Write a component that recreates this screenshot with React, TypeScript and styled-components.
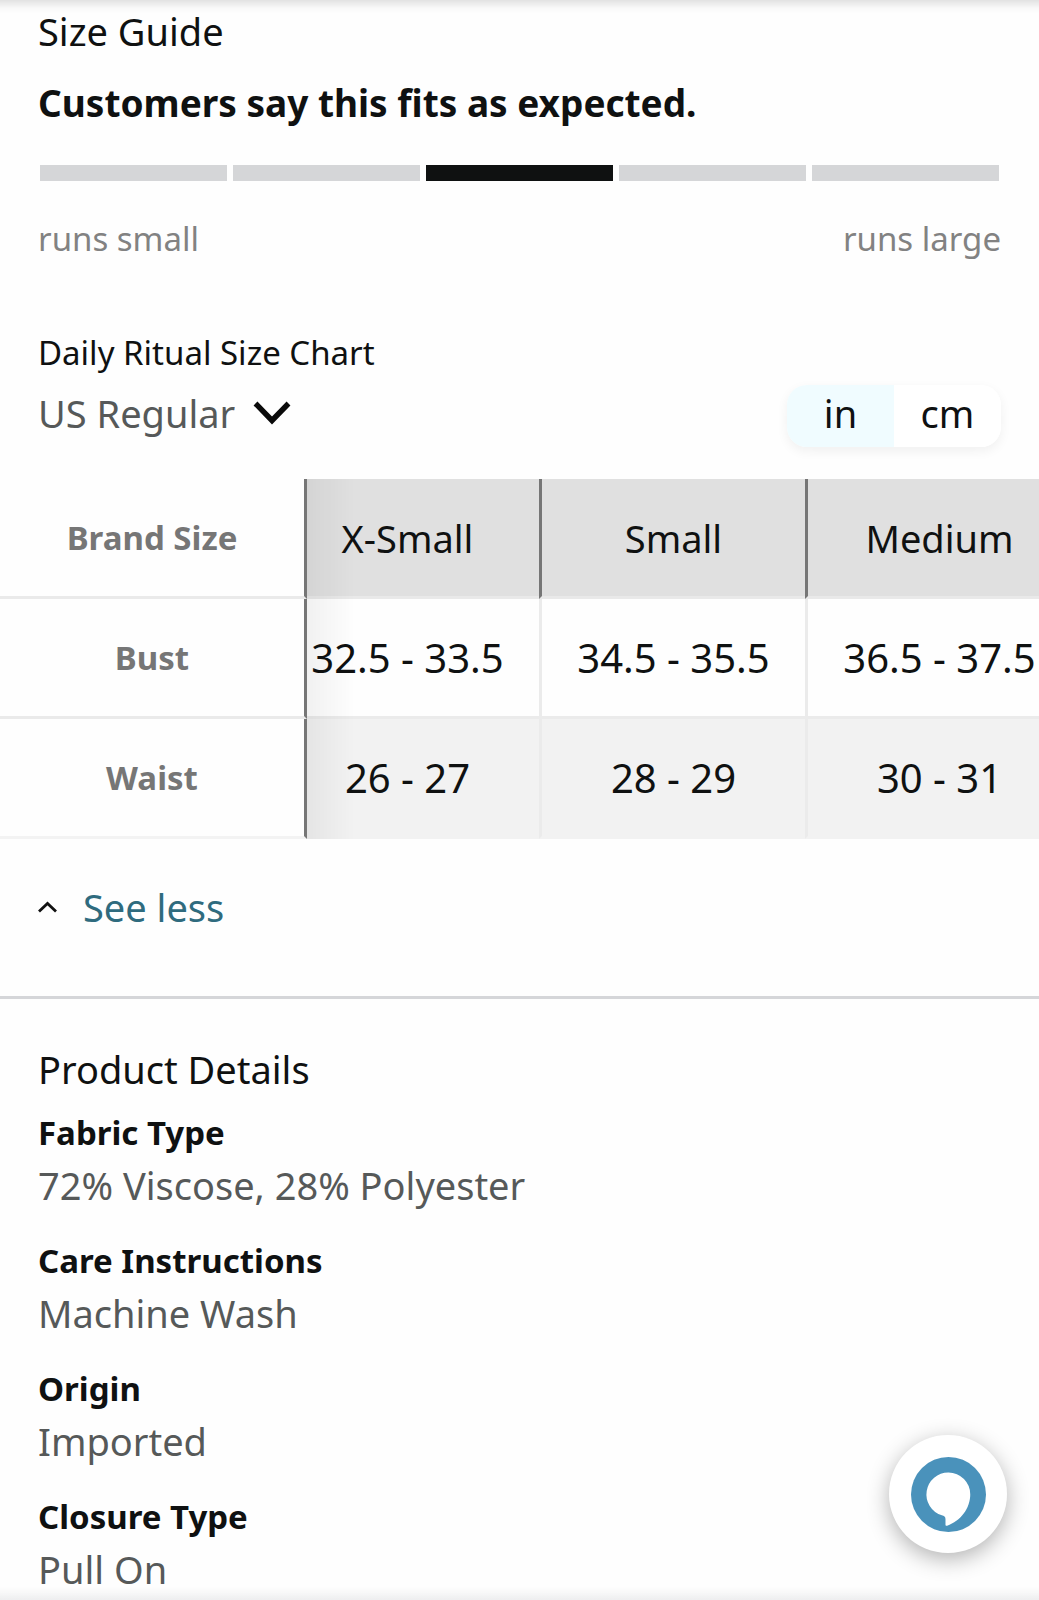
import React, { useLayoutEffect, useRef, useState } from "react";
import styled, { createGlobalStyle } from "styled-components";

const GlobalStyle = createGlobalStyle`
  *, *::before, *::after { box-sizing: border-box; }
  body {
    margin: 0;
    background: #fefefe;
    color: #0f1111;
    font-family: "Noto Sans", "Open Sans", sans-serif;
  }
  button, select, input { font: inherit; color: inherit; }
`;

const TEXT = { large: "38px", medium: "37px", small: "33px" };

const Page = styled.main`
  min-height: 100vh;
  overflow-x: hidden;
`;

const EdgeShadow = styled.div<{ $edge: "top" | "bottom" }>`
  position: fixed;
  z-index: 5;
  left: 0;
  right: 0;
  ${(p) => p.$edge}: 0;
  height: 14px;
  pointer-events: none;
  background: linear-gradient(
    to ${(p) => (p.$edge === "top" ? "bottom" : "top")},
    ${(p) => (p.$edge === "top" ? "rgba(0, 0, 0, 0.11)" : "rgba(20, 30, 50, 0.07)")},
    rgba(0, 0, 0, 0.02) 60%,
    transparent
  );
`;

const Section = styled.section<{ $top: number; $bottom: number }>`
  padding-top: ${(p) => p.$top}px;
  padding-bottom: ${(p) => p.$bottom}px;
`;

const Inset = styled.div`
  padding: 0 38px;
`;

const Title = styled.h2`
  margin: 0 0 12px;
  font-size: ${TEXT.large};
  line-height: 56px;
  font-weight: 400;
`;

const FitSummary = styled.p`
  margin: 0 0 30px;
  font-size: ${TEXT.medium};
  line-height: 64px;
  font-weight: 700;
`;

const FitScale = styled.div`
  display: grid;
  grid-template-columns: repeat(5, 1fr);
  gap: 6px;
  padding: 0 2px;
`;

const FitSegment = styled.span<{ $active: boolean }>`
  height: 16px;
  background: ${(p) => (p.$active ? "#0f1111" : "#d5d6d8")};
`;

const FitLabels = styled.div`
  display: flex;
  justify-content: space-between;
  margin: 34px 0 66px;
  font-size: ${TEXT.small};
  line-height: 48px;
  color: #828282;
`;

const ChartHeader = styled.div`
  display: flex;
  justify-content: space-between;
  align-items: flex-end;
  margin-bottom: 32px;
`;

const ChartIntro = styled.div`
  display: grid;
  gap: 8px;
  justify-items: start;
  padding-bottom: 6px;
`;

const ChartName = styled.label`
  font-size: ${TEXT.small};
  line-height: 48px;
`;

const SelectBox = styled.div`
  display: flex;
  align-items: center;
  gap: 18px;
`;

const SizeSelect = styled.select`
  appearance: none;
  field-sizing: content;
  height: 56px;
  margin: 0;
  padding: 0;
  border: 0;
  background: transparent;
  font-size: ${TEXT.large};
  line-height: 56px;
  color: #565959;
`;

const Units = styled.fieldset`
  display: flex;
  margin: 0;
  padding: 0;
  border: 0;
  border-radius: 20px;
  box-shadow: 0 4px 12px rgba(0, 0, 0, 0.06);
`;

const UnitOption = styled.label<{ $selected: boolean }>`
  position: relative;
  width: 107px;
  padding-bottom: 6px;
  font-size: ${TEXT.large};
  line-height: 56px;
  text-align: center;
  cursor: pointer;
  background: ${(p) => (p.$selected ? "#f0fcff" : "#ffffff")};
  &:first-of-type { border-radius: 20px 0 0 20px; }
  &:last-of-type { border-radius: 0 20px 20px 0; }
`;

const HiddenRadio = styled.input`
  position: absolute;
  inset: 0;
  width: 100%;
  height: 100%;
  margin: 0;
  opacity: 0;
  cursor: pointer;
`;

const TableScroller = styled.div`
  overflow-x: auto;
  scrollbar-width: none;
`;

const SizeTable = styled.table`
  table-layout: fixed;
  width: 1105px;
  border-collapse: separate;
  border-spacing: 0;
`;

const StickyCol = styled.col`
  width: 307px;
`;

const RowHeading = styled.th<{ $last?: boolean }>`
  position: sticky;
  z-index: 1;
  left: 0;
  height: 120px;
  padding: 0;
  background: #fefefe;
  border-right: 3px solid #767676;
  border-bottom: 3px solid ${(p) => (p.$last ? "#f3f3f3" : "#eaeaea")};
  font-size: ${TEXT.small};
  font-weight: 700;
  color: #767676;
  &::after {
    content: "";
    position: absolute;
    top: 0;
    bottom: -3px;
    left: calc(100% + 3px);
    width: 48px;
    background: linear-gradient(to right, rgba(0, 0, 0, 0.05), transparent);
  }
`;

const SizeHeading = styled.th`
  padding: 0;
  background: #e0e0e0;
  border-left: 3px solid #767676;
  border-bottom: 3px solid #e9e9e9;
  font-size: ${TEXT.large};
  font-weight: 400;
`;

const SizeCell = styled.td<{ $shaded: boolean }>`
  padding: 0;
  background: ${(p) => (p.$shaded ? "#f2f2f2" : "#fefefe")};
  border-left: 3px solid #ebebeb;
  border-bottom: 3px solid ${(p) => (p.$shaded ? "#f2f2f2" : "#ebebeb")};
  font-size: 40px;
  text-align: center;
  white-space: nowrap;
`;

const SeeLess = styled.button`
  display: flex;
  align-items: center;
  gap: 26px;
  margin-top: 40px;
  padding: 0;
  border: 0;
  background: none;
  font-size: ${TEXT.large};
  line-height: 56px;
  color: #2f6b7e;
  cursor: pointer;
`;

const Divider = styled.hr`
  height: 3px;
  margin: 0;
  border: 0;
  background: #d5d6d9;
`;

const Details = styled.dl`
  display: grid;
  gap: 24px;
  margin: 0;
`;

const DetailLabel = styled.dt`
  font-size: ${TEXT.small};
  line-height: 48px;
  font-weight: 700;
`;

const DetailValue = styled.dd`
  margin: 0;
  font-size: ${TEXT.large};
  line-height: 56px;
  color: #565959;
`;

const AssistantButton = styled.button`
  position: fixed;
  z-index: 4;
  right: 32px;
  bottom: 47px;
  display: grid;
  place-items: center;
  width: 118px;
  height: 118px;
  padding: 0;
  border: 0;
  border-radius: 50%;
  background: #ffffff;
  box-shadow: 0 6px 22px rgba(0, 0, 0, 0.3);
  cursor: pointer;
`;

const sizes = ["X-Small", "Small", "Medium"];

const measurements = [
  { name: "Bust", values: ["32.5 - 33.5", "34.5 - 35.5", "36.5 - 37.5"] },
  { name: "Waist", values: ["26 - 27", "28 - 29", "30 - 31"] },
];

const details = [
  { label: "Fabric Type", value: "72% Viscose, 28% Polyester" },
  { label: "Care Instructions", value: "Machine Wash" },
  { label: "Origin", value: "Imported" },
  { label: "Closure Type", value: "Pull On" },
];

const ChevronDown = () => (
  <svg width="38" height="24" viewBox="0 0 38 24" fill="none" aria-hidden="true">
    <path d="M2.5 2.5 19 19.5 35.5 2.5" stroke="#0a0a0a" strokeWidth="5.4" />
  </svg>
);

const ChevronUp = () => (
  <svg width="19" height="12" viewBox="0 0 19 12" fill="none" aria-hidden="true">
    <path d="M1 10.5 9.5 2.5 18 10.5" stroke="#111111" strokeWidth="2.8" />
  </svg>
);

const AssistantLogo = () => (
  <svg width="75" height="75" viewBox="216 170 224 224" aria-hidden="true">
    <circle cx="328" cy="282" r="112" fill="#4a92bb" />
    <path
      d="M328 216a65.500 65.500 0 0 0-20 128c7 2 11 5 11 11v17c0 3 2 4 5 3 40-13 69-52 69-93a65.500 65.500 0 0 0-65-66z"
      fill="#ffffff"
    />
  </svg>
);

export default function App() {
  const scroller = useRef<HTMLDivElement>(null);
  const [unit, setUnit] = useState("in");

  // The chart opens nudged sideways so that it reads as scrollable.
  useLayoutEffect(() => {
    if (scroller.current) scroller.current.scrollLeft = 34;
  }, []);

  return (
    <Page>
      <GlobalStyle />
      <EdgeShadow $edge="top" />

      <Section $top={3} $bottom={61}>
        <Inset>
          <Title>Size Guide</Title>
          <FitSummary>Customers say this fits as expected.</FitSummary>
          <FitScale>
            {[0, 1, 2, 3, 4].map((step) => (
              <FitSegment key={step} $active={step === 2} />
            ))}
          </FitScale>
          <FitLabels>
            <span>runs small</span>
            <span>runs large</span>
          </FitLabels>
          <ChartHeader>
            <ChartIntro>
              <ChartName htmlFor="size-range">Daily Ritual Size Chart</ChartName>
              <SelectBox>
                <SizeSelect id="size-range">
                  <option>US Regular</option>
                </SizeSelect>
                <ChevronDown />
              </SelectBox>
            </ChartIntro>
            <Units aria-label="Units">
              {["in", "cm"].map((name) => (
                <UnitOption key={name} $selected={unit === name}>
                  <HiddenRadio
                    type="radio"
                    name="unit"
                    value={name}
                    checked={unit === name}
                    onChange={() => setUnit(name)}
                  />
                  {name}
                </UnitOption>
              ))}
            </Units>
          </ChartHeader>
        </Inset>

        <TableScroller ref={scroller}>
          <SizeTable>
            <colgroup>
              <StickyCol />
              <col span={3} />
            </colgroup>
            <thead>
              <tr>
                <RowHeading scope="col">Brand Size</RowHeading>
                {sizes.map((size) => (
                  <SizeHeading key={size} scope="col">
                    {size}
                  </SizeHeading>
                ))}
              </tr>
            </thead>
            <tbody>
              {measurements.map((row, i) => (
                <tr key={row.name}>
                  <RowHeading scope="row" $last={i === measurements.length - 1}>
                    {row.name}
                  </RowHeading>
                  {row.values.map((value) => (
                    <SizeCell key={value} $shaded={i % 2 === 1}>
                      {value}
                    </SizeCell>
                  ))}
                </tr>
              ))}
            </tbody>
          </SizeTable>
        </TableScroller>

        <Inset>
          <SeeLess type="button">
            <ChevronUp />
            See less
          </SeeLess>
        </Inset>
      </Section>

      <Divider />

      <Section $top={42} $bottom={0}>
        <Inset>
          <Title>Product Details</Title>
          <Details>
            {details.map((item) => (
              <div key={item.label}>
                <DetailLabel>{item.label}</DetailLabel>
                <DetailValue>{item.value}</DetailValue>
              </div>
            ))}
          </Details>
        </Inset>
      </Section>

      <AssistantButton type="button" aria-label="Alexa">
        <AssistantLogo />
      </AssistantButton>
      <EdgeShadow $edge="bottom" />
    </Page>
  );
}
